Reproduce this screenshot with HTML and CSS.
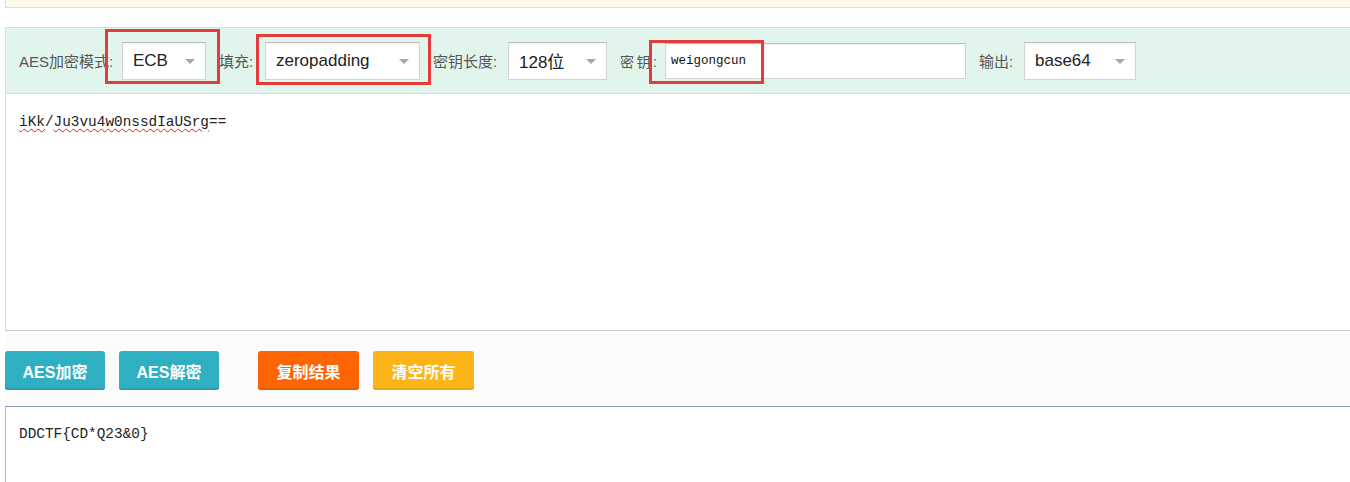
FILE: index.html
```html
<!DOCTYPE html>
<html lang="zh-CN">
<head>
<meta charset="utf-8">
<title>AES加密解密</title>
<link rel="stylesheet" href="styles.css">
</head>
<body>
<div class="page">
  <div class="notice"></div>
  <div class="toolbar">
    <span class="lbl w103">AES加密模式:</span>
    <div class="sel w84"><span>ECB</span><i class="arrow"></i></div>
    <span class="lbl w46">填充:</span>
    <div class="sel w155"><span>zeropadding</span><i class="arrow"></i></div>
    <span class="lbl w75">密钥长度:</span>
    <div class="sel w99"><span>128位</span><i class="arrow"></i></div>
    <span class="lbl w45 key">密钥:</span>
    <div class="inp"><span>weigongcun</span></div>
    <span class="lbl w45">输出:</span>
    <div class="sel w112"><span>base64</span><i class="arrow"></i></div>
  </div>
  <div class="area area-in">
    <p class="mono"><span class="sp">iKk</span>/<span class="sp">Ju3vu4w0nssdIaUSrg</span>==</p>
  </div>
  <div class="actions">
    <button class="btn teal">AES加密</button>
    <button class="btn teal">AES解密</button>
    <button class="btn orange gap">复制结果</button>
    <button class="btn amber">清空所有</button>
  </div>
  <div class="area area-out">
    <p class="mono">DDCTF{CD*Q23&amp;0}</p>
  </div>
  <div class="mark m1"></div>
  <div class="mark m2"></div>
  <div class="mark m3"></div>
</div>
</body>
</html>
```
FILE: styles.css
```css
html, body {
  margin: 0;
  padding: 0;
  background: #ffffff;
  overflow: hidden;
}
body {
  width: 1350px;
  height: 482px;
  font-family: "Noto Sans CJK SC", "Liberation Sans", sans-serif;
}
.page {
  position: relative;
  margin-left: 5px;
  width: 1420px;
}
.notice {
  height: 7px;
  background: #fffbea;
  border: 1px solid #f3dda2;
  border-top: none;
  margin-bottom: 19px;
}
.toolbar {
  display: flex;
  align-items: center;
  height: 65px;
  padding-left: 13px;
  background: #e2f5ec;
  border: 1px solid #c9e7d8;
  box-sizing: content-box;
}
.lbl {
  font-size: 15px;
  color: #555;
  white-space: nowrap;
  flex: none;
  font-family: "Liberation Sans", "Noto Sans CJK SC", sans-serif;
}
.lbl.key {
  font-size: 14px;
  letter-spacing: 2.5px;
}
.w103 { width: 103px; }
.w46 { width: 46px; }
.w75 { width: 75px; }
.w45 { width: 45px; }
.sel, .inp {
  position: relative;
  height: 38px;
  box-sizing: border-box;
  background: #fff;
  border: 1px solid #d3d3d3;
  border-top-color: #bdbdbd;
  box-shadow: inset 0 1px 2px rgba(0,0,0,0.06);
  display: flex;
  align-items: center;
  margin-right: 13px;
  flex: none;
}
.sel span {
  padding-left: 10px;
  font-family: "Liberation Sans", "Noto Sans CJK SC", sans-serif;
  font-size: 17px;
  color: #222;
}
.arrow {
  position: absolute;
  right: 10px;
  top: 16px;
  width: 0;
  height: 0;
  border-left: 5px solid transparent;
  border-right: 5px solid transparent;
  border-top: 5px solid #a6a6a6;
}
.w84 { width: 84px; }
.w155 { width: 155px; }
.w99 { width: 99px; }
.w112 { width: 112px; }
.inp {
  width: 301px;
  height: 36px;
}
.inp span {
  padding-left: 5px;
  font-family: "Liberation Mono", monospace;
  font-size: 12.5px;
  color: #111;
}
.area {
  background: #fff;
  border-left: 1px solid #cddde6;
  box-sizing: border-box;
}
.area-in {
  height: 237px;
  border-bottom: 1px solid #c2cbd1;
  padding: 19px 0 0 13px;
}
.mono {
  margin: 0;
  font-family: "Liberation Mono", monospace;
  font-size: 14.4px;
  line-height: 18px;
  color: #222;
}
.sp {
  text-decoration: underline wavy #e02020;
  text-decoration-thickness: 1px;
  text-underline-offset: 2px;
}
.actions {
  display: flex;
  align-items: flex-start;
  height: 75px;
  padding-top: 20px;
  box-sizing: border-box;
  background: #fbfbfb;
  gap: 14px;
}
.btn {
  width: 100px;
  height: 39px;
  border: none;
  border-radius: 3px;
  color: #fff;
  font-family: "Liberation Sans", "Noto Sans CJK SC", sans-serif;
  font-weight: bold;
  font-size: 16px;
  padding: 0;
  flex: none;
}
.btn.gap { margin-left: 25px; width: 101px; }
.teal { background: #2fafc2; box-shadow: inset 0 -2px 0 #2a9fb1; }
.orange { background: #fd6404; box-shadow: inset 0 -2px 0 #e85b03; }
.amber { background: #fdb418; box-shadow: inset 0 -2px 0 #eaa614; width: 101px; }
.area-out {
  height: 80px;
  border-top: 1px solid #8a9ab3;
  border-left-color: #a9b7c9;
  padding: 18px 0 0 13px;
}
.mark {
  position: absolute;
  border: 3px solid #e23c3c;
  box-sizing: border-box;
}
.m1 { left: 100px; top: 29px; width: 115px; height: 55px; }
.m2 { left: 251px; top: 34px; width: 175px; height: 51px; }
.m3 { left: 644px; top: 40px; width: 115px; height: 44px; }
```
